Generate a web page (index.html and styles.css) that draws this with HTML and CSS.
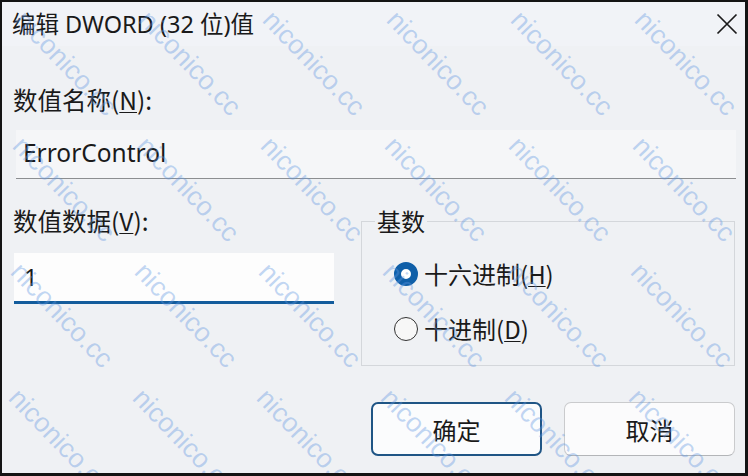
FILE: index.html
```html
<!DOCTYPE html>
<html lang="zh-CN">
<head>
<meta charset="utf-8">
<title>编辑 DWORD (32 位)值</title>
<link rel="stylesheet" href="styles.css">
</head>
<body>
<div class="window">
  <div class="titlebar">
    <span class="title">编辑 DWORD (32 位)值</span>
    <svg class="close" width="22" height="22" viewBox="0 0 22 22"><path d="M1.5 1.5 L20.5 20.5 M20.5 1.5 L1.5 20.5" stroke="#1b1b1b" stroke-width="1.7" fill="none"/></svg>
  </div>
  <div class="content">
    <div class="label">数值名称(<u>N</u>):</div>
    <div class="namebox">ErrorControl</div>
    <div class="row">
      <div class="left">
        <div class="label">数值数据(<u>V</u>):</div>
        <div class="valuebox">1</div>
      </div>
      <fieldset class="base">
        <legend>基数</legend>
        <div class="radio"><span class="dot checked"></span><span>十六进制(<u>H</u>)</span></div>
        <div class="radio"><span class="dot"></span><span>十进制(<u>D</u>)</span></div>
      </fieldset>
    </div>
    <div class="buttons">
      <button class="btn primary">确定</button>
      <button class="btn">取消</button>
    </div>
  </div>
  <div class="watermark">
    <span>niconico.cc</span><span>niconico.cc</span><span>niconico.cc</span><span>niconico.cc</span><span>niconico.cc</span><span>niconico.cc</span>
    <span>niconico.cc</span><span>niconico.cc</span><span>niconico.cc</span><span>niconico.cc</span><span>niconico.cc</span><span>niconico.cc</span>
    <span>niconico.cc</span><span>niconico.cc</span><span>niconico.cc</span><span>niconico.cc</span><span>niconico.cc</span><span>niconico.cc</span>
    <span>niconico.cc</span><span>niconico.cc</span><span>niconico.cc</span><span>niconico.cc</span><span>niconico.cc</span><span>niconico.cc</span>
  </div>
</div>
</body>
</html>
```

FILE: styles.css
```css
html, body {
  margin: 0;
  padding: 0;
  background: #141414;
  width: 748px;
  height: 476px;
  overflow: hidden;
}
.window {
  position: relative;
  margin: 2px 3px 3px 2px;
  width: 743px;
  height: 471px;
  background: #eff1f4;
  font-family: "Noto Sans", "Noto Sans CJK SC", sans-serif;
  color: #1a1a1a;
  overflow: hidden;
}
.titlebar {
  height: 44px;
  display: flex;
  align-items: center;
  justify-content: space-between;
  padding: 0 7px 0 10px;
  background: #f1f3f7;
}
.title {
  font-size: 23.5px;
  line-height: 30px;
}
.close {
  display: block;
}
.content {
  padding: 39px 9px 0 11px;
}
.label {
  font-size: 24.5px;
  line-height: 30px;
  font-family: "Noto Sans CJK SC", sans-serif;
}
u {
  text-decoration: underline;
  text-underline-offset: 2px;
  text-decoration-thickness: 1px;
}
.namebox {
  margin: 15px 0 0 3px;
  height: 48px;
  border-bottom: 1px solid #8c8e91;
  background: #f5f6f8;
  padding-left: 7px;
  font-size: 24.5px;
  line-height: 46px;
}
.row {
  display: flex;
  gap: 27px;
  margin-top: 27px;
}
.left {
  width: 321px;
}
.valuebox {
  margin: 17px 0 0 1px;
  height: 48px;
  background: #fdfdfd;
  border-bottom: 3px solid #135c9c;
  padding-left: 10px;
  font-size: 24px;
  line-height: 48px;
}
.base {
  margin: 0;
  width: 374px;
  box-sizing: border-box;
  height: 160px;
  border: 1px solid #d4d7db;
  padding: 10px 0 0 0;
}
.base legend {
  font-size: 24px;
  line-height: 30px;
  padding: 0 2px;
  margin-left: 13px;
  font-family: "Noto Sans CJK SC", sans-serif;
}
.radio {
  display: flex;
  align-items: center;
  gap: 6px;
  height: 55px;
  padding-left: 32px;
  font-size: 24px;
  font-family: "Noto Sans CJK SC", sans-serif;
}
.dot {
  width: 24px;
  height: 24px;
  box-sizing: border-box;
  border-radius: 50%;
  border: 1.5px solid #333;
  background: #f7f7f7;
}
.dot.checked {
  border: 7px solid #0f5fa8;
  background: #fff;
}
.buttons {
  display: flex;
  justify-content: flex-end;
  gap: 22px;
  margin-top: 36px;
  padding-right: 1px;
}
.btn {
  width: 171px;
  height: 54px;
  box-sizing: border-box;
  border-radius: 7px;
  border: 1px solid #cacbcd;
  border-bottom-color: #b3b5b8;
  background: #fbfbfc;
  font-family: "Noto Sans CJK SC", sans-serif;
  font-size: 24px;
  color: #1a1a1a;
  padding: 0;
}
.btn.primary {
  border: 2px solid #1f5585;
  background: #fbfcfd;
}
.watermark {
  position: absolute;
  left: 27px;
  top: 4px;
  display: grid;
  grid-template-columns: repeat(6, 124px);
  grid-auto-rows: 126px;
  pointer-events: none;
}
.watermark span {
  display: block;
  font-family: "Liberation Sans", sans-serif;
  font-size: 27px;
  line-height: 27px;
  white-space: nowrap;
  color: rgba(95, 150, 225, 0.38);
  transform: rotate(46deg);
  transform-origin: 0 0;
  width: 0;
}
.watermark span:nth-child(n+7) { transform: translateX(-2px) rotate(46deg); }
.watermark span:nth-child(n+13) { transform: translateX(-4px) rotate(46deg); }
.watermark span:nth-child(n+19) { transform: translateX(-6px) rotate(46deg); }
```
